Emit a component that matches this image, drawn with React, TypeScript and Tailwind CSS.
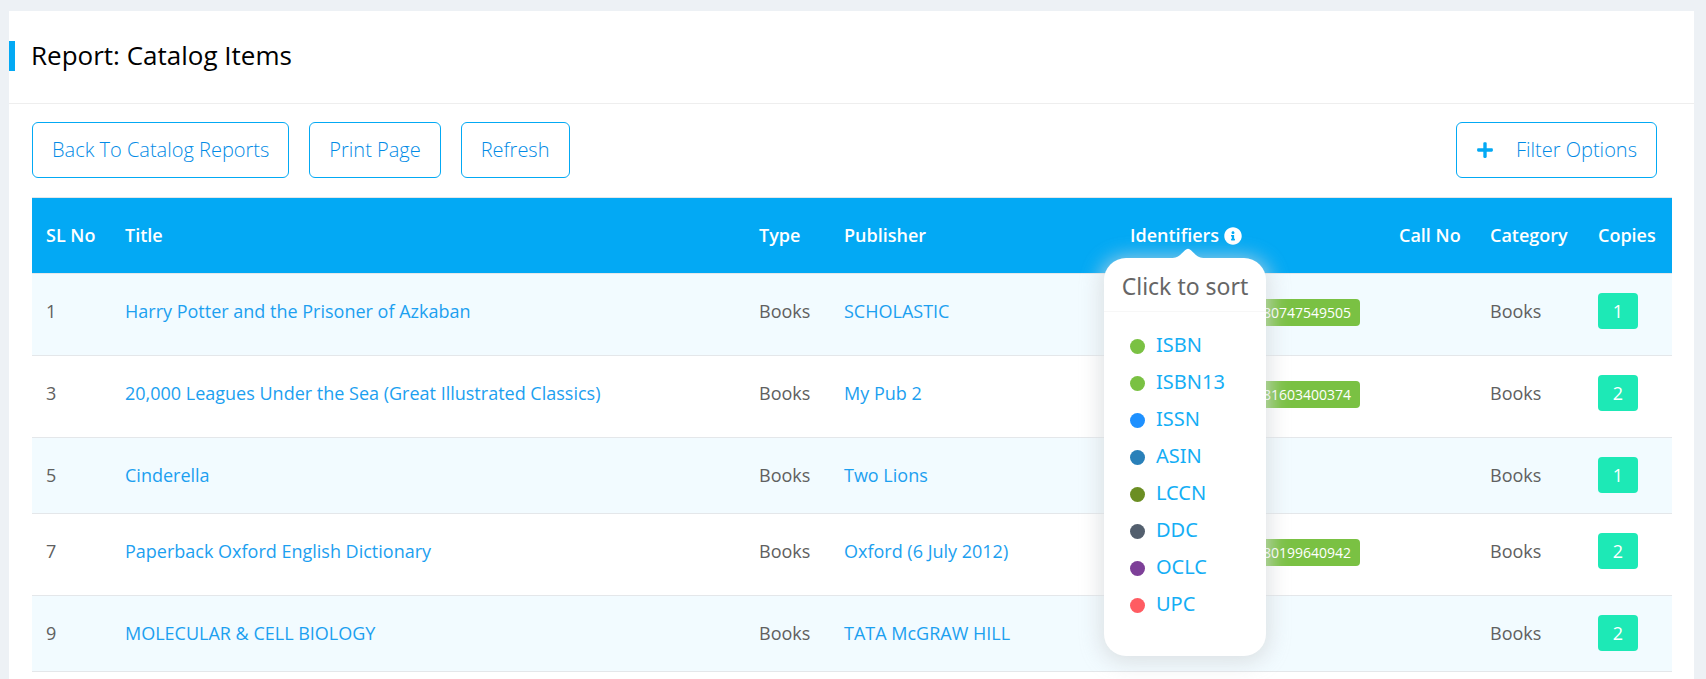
import { FaInfoCircle, FaPlus } from 'react-icons/fa';

type Item = {
  id: number;
  title: string;
  publisher: string;
  isbn13?: string;
  copies: number;
};

const items: Item[] = [
  { id: 1, title: 'Harry Potter and the Prisoner of Azkaban', publisher: 'SCHOLASTIC', isbn13: '9780747549505', copies: 1 },
  { id: 3, title: '20,000 Leagues Under the Sea (Great Illustrated Classics)', publisher: 'My Pub 2', isbn13: '9781603400374', copies: 2 },
  { id: 5, title: 'Cinderella', publisher: 'Two Lions', copies: 1 },
  { id: 7, title: 'Paperback Oxford English Dictionary', publisher: 'Oxford (6 July 2012)', isbn13: '9780199640942', copies: 2 },
  { id: 9, title: 'MOLECULAR & CELL BIOLOGY', publisher: 'TATA McGRAW HILL', copies: 2 },
];

const identifiers = [
  { name: 'ISBN', dot: 'bg-[#7ac143]' },
  { name: 'ISBN13', dot: 'bg-[#7ac143]' },
  { name: 'ISSN', dot: 'bg-[#1e90ff]' },
  { name: 'ASIN', dot: 'bg-[#2980b9]' },
  { name: 'LCCN', dot: 'bg-[#6b8e23]' },
  { name: 'DDC', dot: 'bg-[#535f6e]' },
  { name: 'OCLC', dot: 'bg-[#7d3f98]' },
  { name: 'UPC', dot: 'bg-[#ff5c62]' },
];

const buttonClass =
  'flex h-14 items-center rounded-md border border-[#03a9f4] px-[19px] text-[20px] font-light text-[#028be6]';

function SortPopover() {
  return (
    <div className="absolute top-9 -left-[26px] z-10 h-[398px] w-[162px] rounded-[22px] bg-white font-['Noto_Sans',sans-serif] font-normal shadow-[0_3px_20px_4px_rgba(214,218,220,0.75)]">
      <svg className="absolute -top-[10px] left-[67px]" width="34" height="11" viewBox="0 0 34 11" fill="white">
        <path d="M0 11V10C7 10 9 7 14 2.2C16 .2 18 .2 20 2.2C25 7 27 10 34 10V11Z" />
      </svg>
      <div className="h-[54px] border-b border-[#f7f7f7] text-center text-[23px] leading-[56px] text-[#666]">Click to sort</div>
      <ul className="pt-[14px] pl-[26px]">
        {identifiers.map((entry) => (
          <li key={entry.name} className="flex h-[37px] items-center gap-[11px]">
            <span className={`mt-[3px] size-[15px] rounded-full ${entry.dot}`} />
            <a href="#" className="text-[20px] text-[#14aef5]">{entry.name}</a>
          </li>
        ))}
      </ul>
    </div>
  );
}

export default function App() {
  return (
    <div className="h-screen overflow-hidden bg-[#edf1f5] pt-[11px] pr-3 pl-[9px] font-['Open_Sans',sans-serif]">
      <main className="min-h-full bg-white">
        <header className="flex h-[93px] items-center border-b border-[#eee]">
          <div className="mb-0.5 h-[30px] w-[6px] bg-[#03a9f4]" />
          <h1 className="mb-1 ml-4 text-[26px] leading-8 text-black">Report: Catalog Items</h1>
        </header>
        <div className="pt-[18px] pr-[22px] pl-[23px]">
          <div className="flex gap-5 pr-[15px]">
            <button type="button" className={buttonClass}>Back To Catalog Reports</button>
            <button type="button" className={buttonClass}>Print Page</button>
            <button type="button" className={buttonClass}>Refresh</button>
            <button type="button" className={`${buttonClass} ml-auto gap-[22px]`}>
              <FaPlus size={18} className="text-[#03a9f4]" />
              Filter Options
            </button>
          </div>
          <table className="mt-[19px] w-full table-fixed border-collapse text-left text-[18px] text-[#606060]">
            <colgroup>
              <col className="w-[79px]" />
              <col />
              <col className="w-[85px]" />
              <col className="w-[286px]" />
              <col className="w-[269px]" />
              <col className="w-[91px]" />
              <col className="w-[108px]" />
              <col className="w-[88px]" />
            </colgroup>
            <thead>
              <tr className="h-[76px] border-t border-[#e4e7ea] bg-[#03a9f4] text-white *:px-[14px] *:font-semibold *:whitespace-nowrap">
                <th>SL No</th>
                <th>Title</th>
                <th>Type</th>
                <th>Publisher</th>
                <th>
                  <div className="relative inline-flex items-center gap-[5px]">
                    Identifiers
                    <FaInfoCircle size={18} />
                    <SortPopover />
                  </div>
                </th>
                <th>Call No</th>
                <th>Category</th>
                <th>Copies</th>
              </tr>
            </thead>
            <tbody>
              {items.map((item) => (
                <tr
                  key={item.id}
                  className={`border-t border-[#e4e7ea] odd:bg-[#f2fbff] *:px-[14px] *:pt-[19px] *:align-top *:leading-9 *:whitespace-nowrap ${item.isbn13 ? 'h-[82px]' : 'h-[76px]'}`}
                >
                  <td>{item.id}</td>
                  <td><a href="#" className="text-[#1ca0f0]">{item.title}</a></td>
                  <td>Books</td>
                  <td><a href="#" className="text-[#1ca0f0]">{item.publisher}</a></td>
                  <td>
                    {item.isbn13 && (
                      <span className="mt-1.5 mr-[11px] ml-auto block h-[27px] w-fit rounded bg-[#7ac143] px-[9px] text-[14px] leading-[27px] text-white">
                        {item.isbn13}
                      </span>
                    )}
                  </td>
                  <td />
                  <td>Books</td>
                  <td>
                    <button type="button" className="block h-9 w-10 rounded bg-[#1de9b6] text-center text-white">
                      {item.copies}
                    </button>
                  </td>
                </tr>
              ))}
              <tr className="h-[82px] border-t border-[#e4e7ea]">
                <td colSpan={8} />
              </tr>
            </tbody>
          </table>
        </div>
      </main>
    </div>
  );
}
